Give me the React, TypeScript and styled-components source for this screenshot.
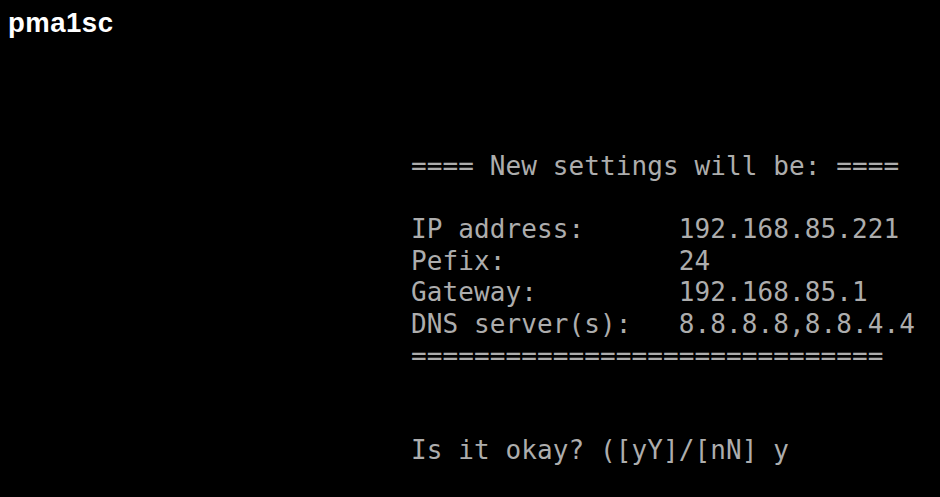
import React from "react";
import styled, { createGlobalStyle } from "styled-components";

const Global = createGlobalStyle`
  html, body {
    margin: 0;
    padding: 0;
    background: #000;
  }
  #root {
    min-height: 497px;
    background: #000;
  }
`;

const Screen = styled.div`
  display: flex;
  flex-direction: column;
  width: 940px;
  height: 497px;
  background: #000;
  overflow: hidden;
`;

const Caption = styled.div`
  padding: 7px 8px 6px;
  font-family: "Liberation Sans", Arial, sans-serif;
  font-weight: 700;
  font-size: 27.5px;
  line-height: 32px;
  color: #fff;
  letter-spacing: 0.5px;
`;

const Console = styled.div`
  margin-top: 106px;
  padding-left: 411px;
  display: flex;
  flex-direction: column;
  font-family: "DejaVu Sans Mono", "Liberation Mono", monospace;
  font-size: 26px;
  letter-spacing: 0.1px;
  line-height: 31.6px;
  color: #adadad;
  white-space: pre;
`;

const Line = styled.div`
  height: 31.6px;
`;

const lines = [
  "==== New settings will be: ====",
  "",
  "IP address:      192.168.85.221",
  "Pefix:           24",
  "Gateway:         192.168.85.1",
  "DNS server(s):   8.8.8.8,8.8.4.4",
  "==============================",
  "",
  "",
  "Is it okay? ([yY]/[nN] y",
];

export default function App() {
  return (
    <Screen>
      <Global />
      <Caption>pma1sc</Caption>
      <Console>
        {lines.map((l, i) => (
          <Line key={i}>{l}</Line>
        ))}
      </Console>
    </Screen>
  );
}
